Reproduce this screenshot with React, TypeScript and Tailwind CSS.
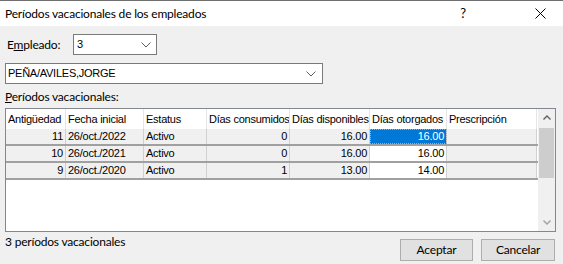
import React from "react";

const cols = [
  { w: 60, label: "Antigüedad" },
  { w: 78, label: "Fecha inicial" },
  { w: 63, label: "Estatus" },
  { w: 83, label: "Días consumidos" },
  { w: 80, label: "Días disponibles" },
  { w: 77, label: "Días otorgados" },
  { w: 90, label: "Prescripción" },
];

const rows = [
  ["11", "26/oct./2022", "Activo", "0", "16.00", "16.00", ""],
  ["10", "26/oct./2021", "Activo", "0", "16.00", "16.00", ""],
  ["9", "26/oct./2020", "Activo", "1", "13.00", "14.00", ""],
];

const rightCols = [0, 3, 4, 5];

function Chevron() {
  return (
    <svg width="10" height="6" viewBox="0 0 10 6" className="shrink-0">
      <path d="M0.5 0.5 L5 5 L9.5 0.5" fill="none" stroke="#606060" strokeWidth="1" />
    </svg>
  );
}

export default function App() {
  const font = { fontFamily: '"Segoe UI", Lato, "Noto Sans", sans-serif', letterSpacing: "-0.2px" };
  const grid = { fontFamily: 'Tahoma, "Liberation Sans", sans-serif', letterSpacing: "-0.25px" };
  return (
    <div className="w-[563px] h-[264px] bg-[#f0f0f0] flex flex-col text-black overflow-hidden" style={font}>
      <div className="h-[26px] bg-white border-t border-[#707070] flex items-center text-[12px] shrink-0">
        <span className="ml-[5px] flex-1">Períodos vacacionales de los empleados</span>
        <span className="w-[20px] text-center mr-[62px] text-[13px]">?</span>
        <svg width="11" height="11" viewBox="0 0 11 11" className="mr-[17px]">
          <path d="M0.5 0.5 L10.5 10.5 M10.5 0.5 L0.5 10.5" stroke="#000" strokeWidth="1" />
        </svg>
      </div>
      <div className="flex items-center mt-[8px] h-[21px]">
        <span className="ml-[7px] w-[66px] text-[12px]">
          E<span className="underline">m</span>pleado:
        </span>
        <div className="w-[84px] h-[21px] bg-white border border-[#7a7a7a] flex items-center pl-[3px] pr-[5px] text-[11px]" style={grid}>
          <span className="flex-1">3</span>
          <Chevron />
        </div>
      </div>
      <div className="ml-[5px] mt-[8px] w-[318px] h-[21px] bg-white border border-[#7a7a7a] flex items-center pl-[2px] pr-[6px] text-[11px]" style={grid}>
        <span className="flex-1">PEÑA/AVILES,JORGE</span>
        <Chevron />
      </div>
      <div className="ml-[5px] mt-[5px] text-[12px] leading-[16px]">
        <span className="underline">P</span>eríodos vacacionales:
      </div>
      <div className="ml-[5px] mt-[3px] w-[551px] h-[124px] bg-white border border-[#828790] flex text-[11px]" style={grid}>
        <div className="flex-1 flex flex-col">
          <div className="flex h-[20px] shrink-0">
            {cols.map((c, i) => (
              <div
                key={i}
                className="h-full flex items-center pl-[2px] border-r border-[#e5e5e5] whitespace-nowrap overflow-hidden"
                style={{ width: c.w }}
              >
                {c.label}
              </div>
            ))}
          </div>
          {rows.map((r, ri) => (
            <div key={ri} className="flex h-[17px] shrink-0 border-b-2 border-[#a0a0a0]">
              {r.map((v, ci) => {
                const sel = ri === 0 && ci === 5;
                const white = ci === 5 && !sel;
                return (
                  <div
                    key={ci}
                    className={
                      "h-full flex items-center px-[2px] whitespace-nowrap border-r border-[#d0d0d0] " +
                      (rightCols.includes(ci) ? "justify-end " : "justify-start ") +
                      (sel
                        ? "bg-[#0078d7] text-white outline outline-1 outline-dotted outline-[#f0a030] -outline-offset-1 "
                        : white
                        ? "bg-white "
                        : "bg-[#f0f0f0] ")
                    }
                    style={{ width: cols[ci].w }}
                  >
                    {v}
                  </div>
                );
              })}
            </div>
          ))}
        </div>
        <div className="w-[17px] bg-[#f0f0f0] flex flex-col items-center">
          <div className="h-[17px] flex items-center justify-center">
            <svg width="8" height="5" viewBox="0 0 8 5">
              <path d="M0.5 4.5 L4 1 L7.5 4.5" fill="none" stroke="#606060" strokeWidth="1.4" />
            </svg>
          </div>
          <div className="w-[15px] h-[50px] mt-[2px] bg-[#cdcdcd]" />
          <div className="flex-1" />
          <div className="h-[17px] flex items-center justify-center">
            <svg width="8" height="5" viewBox="0 0 8 5">
              <path d="M0.5 0.5 L4 4 L7.5 0.5" fill="none" stroke="#a0a0a0" strokeWidth="1.4" />
            </svg>
          </div>
        </div>
      </div>
      <div className="flex">
        <span className="ml-[5px] text-[12px] mt-[1px] flex-1">3 períodos vacacionales</span>
        <button className="mt-[7px] w-[73px] h-[22px] bg-[#e1e1e1] border border-[#adadad] text-[12px] flex items-center justify-center">
          Aceptar
        </button>
        <button className="mt-[7px] ml-[8px] mr-[8px] w-[74px] h-[22px] bg-[#e1e1e1] border border-[#adadad] text-[12px] flex items-center justify-center">
          Cancelar
        </button>
      </div>
    </div>
  );
}
